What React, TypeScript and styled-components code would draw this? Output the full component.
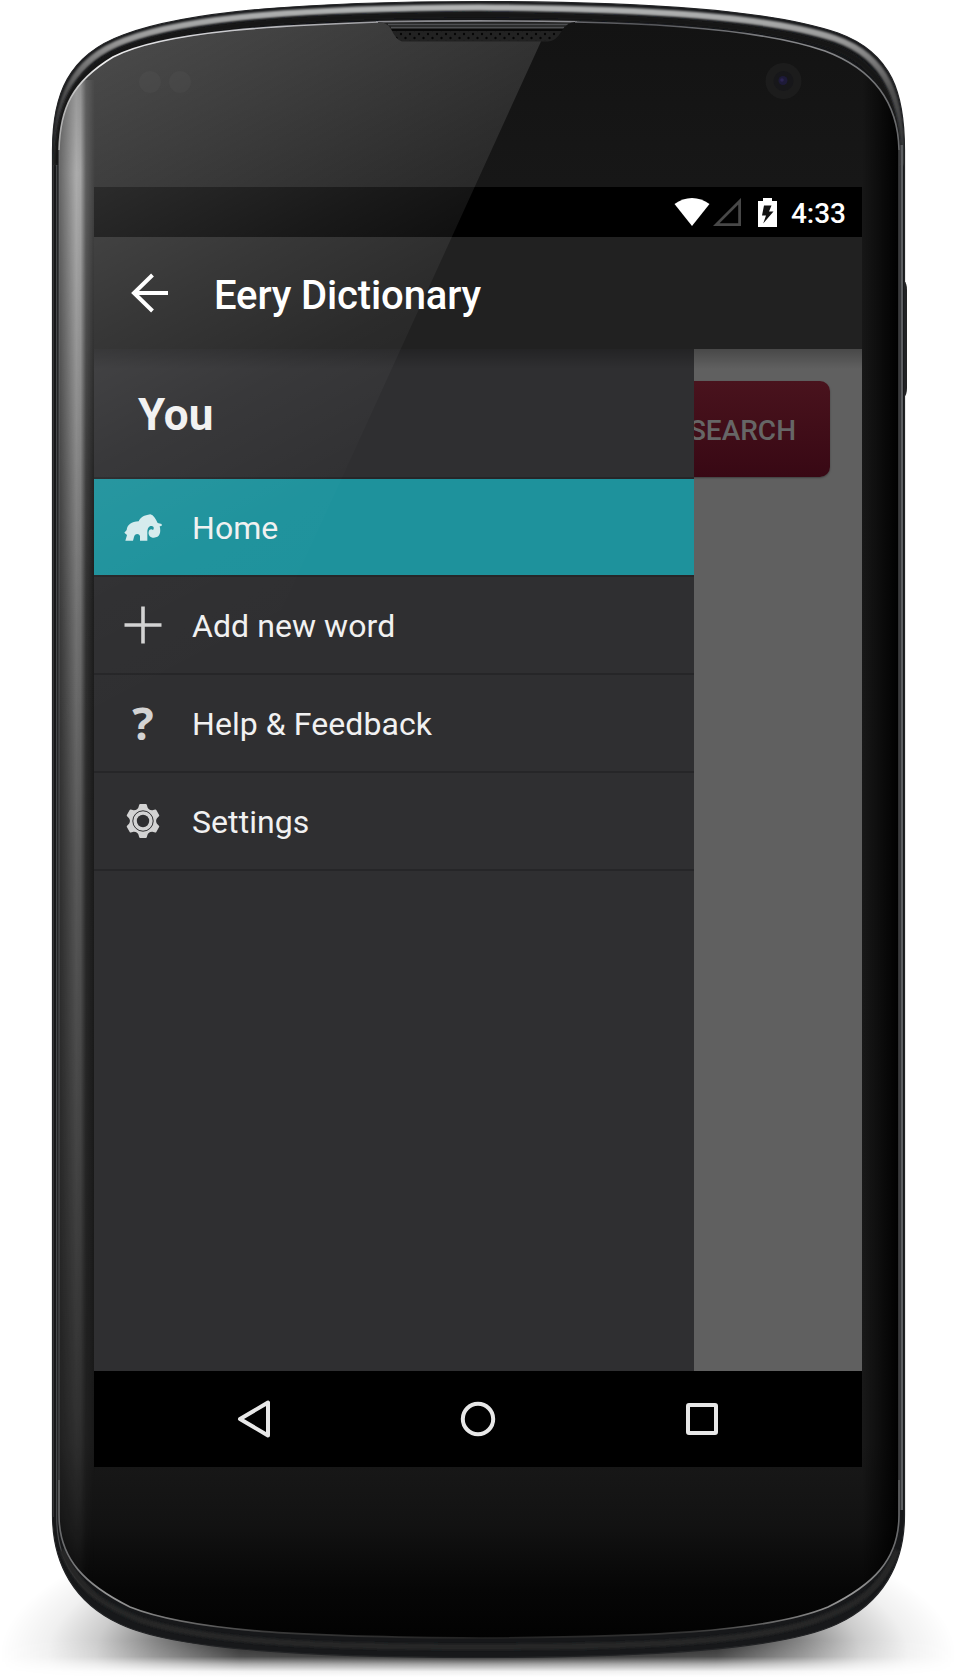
import React from "react";
import styled, { createGlobalStyle, css } from "styled-components";

const GlobalStyle = createGlobalStyle`
  * { box-sizing: border-box; }
  body { margin: 0; background: #fff; font-family: Roboto, sans-serif; }
`;

const Phone = styled.main`
  position: relative;
  width: 958px;
  height: 1678px;
  padding: 187px 96px 211px 94px;
  overflow: hidden;
`;

const Layer = styled.svg`
  position: absolute;
  inset: 0;
  pointer-events: none;
`;

const Screen = styled.div`
  position: relative;
  isolation: isolate;
  width: 768px;
  height: 1280px;
  display: flex;
  flex-direction: column;
  background: #000;
`;

const StatusBar = styled.header`
  height: 50px;
  flex: none;
  display: flex;
  align-items: center;
  justify-content: flex-end;
  padding-right: 16px;
`;

const StatusIcon = styled.svg<{ $gap: number }>`
  display: block;
  margin-right: ${(p) => p.$gap}px;
`;

const Clock = styled.span`
  color: #fff;
  font-size: 28px;
  font-weight: 500;
  line-height: 34px;
  padding-top: 4px;
`;

const Toolbar = styled.div`
  position: relative;
  z-index: 2;
  height: 112px;
  flex: none;
  display: flex;
  align-items: center;
  gap: 39px;
  padding-left: 33px;
  background: #212121;

  &::after {
    content: "";
    position: absolute;
    left: 0;
    right: 0;
    top: 100%;
    height: 20px;
    background: linear-gradient(rgba(0, 0, 0, 0.25), rgba(0, 0, 0, 0.12) 50%, rgba(0, 0, 0, 0));
  }
`;

const Title = styled.h1`
  margin: 0;
  padding-top: 6px;
  color: #fff;
  font-size: 40px;
  font-weight: 500;
  line-height: 48px;
  letter-spacing: -0.13px;
`;

const Content = styled.div`
  position: relative;
  flex: 1;
  display: flex;
  justify-content: flex-end;
  align-items: flex-start;
  padding: 32px;
  background: #606060;
`;

const SearchButton = styled.button`
  height: 96px;
  border: 0;
  border-radius: 10px;
  padding: 3px 34px 0;
  background: linear-gradient(#49131d, #380814);
  box-shadow: 0 1px 2px rgba(0, 0, 0, 0.35);
  color: #666;
  font: 500 28px/34px Roboto, sans-serif;
`;

const Drawer = styled.nav`
  position: absolute;
  top: 0;
  left: 0;
  bottom: 0;
  width: 600px;
  background: #2f2f31;
`;

const DrawerHeader = styled.div`
  height: 130px;
  padding: 41px 0 0 44px;
  border-bottom: 2px solid #262628;
  color: #f1f1f1;
  font-size: 44px;
  font-weight: 700;
  line-height: 50px;
`;

const Item = styled.div<{ $active?: boolean }>`
  height: 98px;
  display: flex;
  align-items: center;
  gap: 25px;
  padding-left: 25px;
  border-bottom: 2px solid #262628;
  color: #f1f1f1;
  ${(p) => p.$active && css`background: #1e929c;`}
`;

const IconSlot = styled.span`
  width: 48px;
  height: 48px;
  display: flex;
  align-items: center;
  justify-content: center;
`;

const QuestionMark = styled.span`
  color: #d3d3d3;
  font: 700 45px/46px "Open Sans", sans-serif;
`;

const Label = styled.span`
  padding-top: 2px;
  font-size: 32px;
  line-height: 38px;
  letter-spacing: 0.07px;
`;

const NavBar = styled.footer`
  height: 96px;
  flex: none;
  display: grid;
  grid-template-columns: repeat(3, 224px);
  justify-content: center;
  align-items: center;
  justify-items: center;
`;

const OUTER =
  "M52.500 150 C52.500 95 68 55 123 35 C190 10 310 2 479 1.500 C650 2 770 10 838 33 C893 53 904.500 95 904.500 150 V1515 C904.500 1565 882 1603 837 1624 C782 1650 647 1657 479 1657.500 C310 1657 175 1650 120 1624 C75 1603 52.500 1565 52.500 1515 Z";
const FACE =
  "M59 150 C60 108 72 82 113 57 C165 30 290 25 378 22 Q387 22 391 29 Q396 40 402 41.500 H548 Q556 41 561 32 Q567 22 575 22 C680 24 770 32 825 51 C870 68 898 100 899 150 V1515 C899 1560 873 1585 828 1607 C765 1633 640 1637 479 1638 C320 1637 195 1633 130 1607 C86 1585 59 1560 59 1515 Z";

function Body() {
  return (
    <Layer width="958" height="1678" viewBox="0 0 958 1678">
      <defs>
        <radialGradient id="shadow" gradientUnits="userSpaceOnUse" cx="0" cy="0" r="1" gradientTransform="translate(478 1655) scale(478 160)">
          <stop offset="0" stopColor="#000" />
          <stop offset=".5" stopColor="#000" stopOpacity=".85" />
          <stop offset=".68" stopColor="#000" stopOpacity=".48" />
          <stop offset=".8" stopColor="#000" stopOpacity=".2" />
          <stop offset=".9" stopColor="#000" stopOpacity=".06" />
          <stop offset="1" stopColor="#000" stopOpacity="0" />
        </radialGradient>
        <linearGradient id="cut" gradientUnits="userSpaceOnUse" x1="0" x2="0" y1="1640" y2="1677">
          <stop offset="0" stopColor="#fff" />
          <stop offset=".45" stopColor="#d0d0d0" />
          <stop offset=".65" stopColor="#606060" />
          <stop offset=".85" stopColor="#101010" />
          <stop offset="1" stopColor="#000" />
        </linearGradient>
        <mask id="cutMask">
          <rect width="958" height="1678" fill="url(#cut)" />
        </mask>
        <linearGradient id="metal" gradientUnits="userSpaceOnUse" x1="0" x2="0" y1="4" y2="150">
          <stop offset="0" stopColor="#b4b6b6" />
          <stop offset=".25" stopColor="#999" />
          <stop offset=".6" stopColor="#505050" />
          <stop offset="1" stopColor="#333436" />
        </linearGradient>
        <linearGradient id="edge" gradientUnits="userSpaceOnUse" x1="60" x2="899" y1="0" y2="0">
          <stop offset="0" stopColor="#a0a0a0" />
          <stop offset=".05" stopColor="#eee" />
          <stop offset=".15" stopColor="#ccccd0" />
          <stop offset=".4" stopColor="#8b8b90" />
          <stop offset=".7" stopColor="#55565a" />
          <stop offset=".9" stopColor="#8b8c8f" />
          <stop offset="1" stopColor="#68696b" />
        </linearGradient>
        <linearGradient id="bottomEdge" gradientUnits="userSpaceOnUse" x1="59" x2="899" y1="0" y2="0">
          <stop offset="0" stopColor="#68696b" />
          <stop offset=".06" stopColor="#999" />
          <stop offset=".25" stopColor="#3a3a3a" />
          <stop offset=".5" stopColor="#222" />
          <stop offset=".75" stopColor="#343434" />
          <stop offset=".94" stopColor="#999" />
          <stop offset="1" stopColor="#68696b" />
        </linearGradient>
        <linearGradient id="face" gradientUnits="userSpaceOnUse" x1="0" x2="0" y1="22" y2="1638">
          <stop offset="0" stopColor="#131313" />
          <stop offset=".1" stopColor="#171717" />
          <stop offset=".88" stopColor="#191919" />
          <stop offset=".93" stopColor="#121212" />
          <stop offset=".97" stopColor="#060606" />
          <stop offset="1" stopColor="#020202" />
        </linearGradient>
        <linearGradient id="sheen" gradientUnits="userSpaceOnUse" x1="59" x2="95" y1="0" y2="0">
          <stop offset="0" stopColor="#b4b4b4" stopOpacity=".3" />
          <stop offset=".2" stopColor="#b4b4b4" stopOpacity=".55" />
          <stop offset=".48" stopColor="#b4b4b4" stopOpacity=".92" />
          <stop offset=".6" stopColor="#b4b4b4" stopOpacity=".85" />
          <stop offset=".75" stopColor="#b4b4b4" stopOpacity=".25" />
          <stop offset="1" stopColor="#b4b4b4" stopOpacity="0" />
        </linearGradient>
        <linearGradient id="sheenFade" gradientUnits="userSpaceOnUse" x1="0" x2="0" y1="80" y2="1640">
          <stop offset="0" stopColor="#b0b0b0" />
          <stop offset=".06" stopColor="#e8e8e8" />
          <stop offset=".24" stopColor="#bcbcbc" />
          <stop offset=".5" stopColor="#747474" />
          <stop offset=".85" stopColor="#2e2e2e" />
          <stop offset=".95" stopColor="#0c0c0c" />
          <stop offset="1" stopColor="#000" />
        </linearGradient>
        <mask id="sheenMask">
          <rect width="958" height="1678" fill="url(#sheenFade)" />
        </mask>
        <linearGradient id="rightShade" gradientUnits="userSpaceOnUse" x1="862" x2="899" y1="0" y2="0">
          <stop offset="0" stopColor="#000" stopOpacity="0" />
          <stop offset=".8" stopColor="#000" stopOpacity=".8" />
          <stop offset="1" stopColor="#000" />
        </linearGradient>
        <clipPath id="faceClip"><path d={FACE} /></clipPath>
        <clipPath id="outerClip"><path d={OUTER} /></clipPath>
        <clipPath id="bottomClip"><rect y="1480" width="958" height="198" /></clipPath>
        <pattern id="dots" x="399" y="32" width="9" height="8" patternUnits="userSpaceOnUse">
          <circle cx="2" cy="2" r="1.2" fill="#050505" />
          <circle cx="6.5" cy="6" r="1.2" fill="#050505" />
        </pattern>
        <filter id="soft"><feGaussianBlur stdDeviation="1" /></filter>
      </defs>

      <rect y="1490" width="958" height="188" fill="url(#shadow)" mask="url(#cutMask)" />
      <path d="M904 281 Q907 283 907 290 V388 Q907 395 904 397 Z" fill="#222324" />
      <path d={OUTER} fill="#17181a" />
      <g clipPath="url(#outerClip)">
        <path d="M55.500 165 C55.500 100 71 60 125 40.500 C190 16 310 8.500 479 7.500 C650 8.500 770 17 835 38.500 C888 57 902 98 902 165" fill="none" stroke="url(#metal)" strokeWidth="6.500" filter="url(#soft)" />
        <path d="M57 165 C57 106 72 72 125 49 C190 24 310 16 479 15 C650 16 770 25 831 46 C884 66 898 106 898 165" fill="none" stroke="#141518" strokeWidth="6" filter="url(#soft)" />
        <path d="M56.700 165 V1517 C56.700 1567 82 1595 125 1614" fill="none" stroke="#77787a" strokeWidth="1.2" opacity=".55" />
        <path d="M53 165 V1517" stroke="#48494b" strokeWidth="1.2" />
        <path d="M901.800 145 V1510" stroke="#5c5e61" strokeWidth="2.500" />
        <path d="M62 1550 C80 1594 110 1608 140 1620 C210 1644 340 1647 479 1647 C620 1647 750 1644 817 1620 C850 1608 880 1594 897 1550" fill="none" stroke="#262828" strokeWidth="6" filter="url(#soft)" />
      </g>
      <path d={OUTER} fill="none" stroke="#222325" strokeWidth="1.2" />

      <path d="M378 20 H580 L560 43 H397 Z" fill="#222" />
      <path d="M388 24.500 H568 M391 27.500 H564" stroke="#4e4f52" strokeWidth="1.4" />
      <path d="M391 30 H563" stroke="#090909" strokeWidth="2" />
      <rect x="396" y="31" width="162" height="10" fill="url(#dots)" />
      <path d="M376 21.700 Q479 20 577 21.700" fill="none" stroke="#8b8b90" strokeWidth="1.6" />

      <path d={FACE} fill="url(#face)" />
      <g clipPath="url(#faceClip)">
        <rect x="862" y="22" width="37" height="1616" fill="url(#rightShade)" />
        <g mask="url(#sheenMask)">
          <rect x="58" y="80" width="37" height="1560" fill="url(#sheen)" />
        </g>
        <circle cx="150" cy="82" r="11" fill="#1a1a1a" />
        <circle cx="180" cy="82" r="11" fill="#1a1a1a" />
        <circle cx="783.5" cy="81" r="18" fill="#1c1c1c" />
        <circle cx="783.5" cy="81" r="10" fill="#17171a" />
        <circle cx="783" cy="80.5" r="4.5" fill="#1d1a38" />
        <circle cx="782" cy="80" r="1.8" fill="#2b2452" />
      </g>
      <path d="M59 150 C60 108 72 82 113 57 C165 30 290 25 378 22 M575 22 C680 24 770 32 825 51 C870 68 898 100 899 150" fill="none" stroke="url(#edge)" strokeWidth="1.6" />
      <path d="M59 150 V1480 M899 150 V1480" stroke="#4d4e50" strokeWidth="1.3" />
      <g clipPath="url(#bottomClip)">
        <path d={FACE} fill="none" stroke="url(#bottomEdge)" strokeWidth="1.6" />
      </g>
    </Layer>
  );
}

function Gloss() {
  return (
    <Layer width="958" height="1678" viewBox="0 0 958 1678">
      <defs>
        <linearGradient id="gloss" gradientUnits="userSpaceOnUse" x1="0" y1="0" x2="322" y2="621">
          <stop offset="0" stopColor="#fff" stopOpacity=".26" />
          <stop offset=".116" stopColor="#fff" stopOpacity=".235" />
          <stop offset=".3" stopColor="#fff" stopOpacity=".17" />
          <stop offset=".49" stopColor="#fff" stopOpacity=".1" />
          <stop offset=".657" stopColor="#fff" stopOpacity=".045" />
          <stop offset=".83" stopColor="#fff" stopOpacity=".01" />
          <stop offset="1" stopColor="#fff" stopOpacity="0" />
        </linearGradient>
      </defs>
      <path d="M59 150 C60 108 72 82 113 57 C165 30 290 25 378 22 Q387 22 391 29 Q396 40 402 41.500 H541 L195 800 H59 Z" fill="url(#gloss)" />
    </Layer>
  );
}

function BackArrow() {
  return (
    <svg width="48" height="48" viewBox="0 0 48 48" fill="none" stroke="#fff" strokeWidth="4">
      <path d="M25.5 6 L7 24 L25.5 42 M7 24 H41" />
    </svg>
  );
}

function Elephant() {
  return (
    <svg width="38" height="27" viewBox="102 130 114 81" fill="#d5ebed">
      <path d="M103 186 L110 178 C112 162 124 153 146 152 C152 139 162 134 181 131 C191 134 196 143 203 157 L215 160 V166 L209 167 C214 186 209 201 192 201 C180 201 174 193 176 183 C178 176 184 174 189 178 C193 174 192 167 185 166 C177 165 172 173 172 184 V210 H150 V197 C148 187 134 187 132 199 L129 210 H106 L111 193 Z" />
    </svg>
  );
}

function Plus() {
  return (
    <svg width="38" height="38" viewBox="0 0 38 38" stroke="#d3d3d3" strokeWidth="3.6">
      <path d="M.5 19 H37.5 M19 .5 V37.5" />
    </svg>
  );
}

function Gear() {
  return (
    <svg width="36" height="36" viewBox="-18 -18 36 36" fill="#d3d3d3">
      {[0, 60, 120, 180, 240, 300].map((angle) => (
        <path key={angle} d="M-6.5 -10.5 L-4.6 -13.5 L-3.8 -16.2 Q-3.6 -17 -2.8 -17 H2.8 Q3.6 -17 3.8 -16.2 L4.6 -13.5 L6.5 -10.5 Z" transform={`rotate(${angle})`} />
      ))}
      <circle r="13.2" />
      <circle r="10.2" fill="none" stroke="#2f2f31" strokeWidth="1" />
      <circle r="6.2" fill="#2f2f31" />
    </svg>
  );
}

const items = [
  { label: "Home", icon: <Elephant />, active: true },
  { label: "Add new word", icon: <Plus /> },
  { label: "Help & Feedback", icon: <QuestionMark>?</QuestionMark> },
  { label: "Settings", icon: <Gear /> },
];

export default function App() {
  return (
    <>
      <GlobalStyle />
      <Phone>
        <Body />
        <Screen>
          <StatusBar>
            <StatusIcon $gap={3} width="36" height="28" viewBox="0 0 36 28">
              <path d="M.5 6 C11 -2 25 -2 35.500 6 L18 28 Z" fill="#fff" />
            </StatusIcon>
            <StatusIcon $gap={17} width="28" height="28" viewBox="0 0 28 28">
              <path d="M3.300 26.600 H26.600 V3.300 Z" fill="none" stroke="#484848" strokeWidth="2.800" />
            </StatusIcon>
            <StatusIcon $gap={14} width="19" height="29" viewBox="0 0 19 29">
              <path d="M5 0 H14 V3 H19 V29 H0 V3 H5 Z" fill="#fff" />
              <path d="M6 7.500 H13.500 L11 13.500 H15.500 L5.200 25.500 L8 17.500 H4 Z" fill="#111" />
            </StatusIcon>
            <Clock>4:33</Clock>
          </StatusBar>
          <Toolbar>
            <BackArrow />
            <Title>Eery Dictionary</Title>
          </Toolbar>
          <Content>
            <SearchButton>SEARCH</SearchButton>
            <Drawer>
              <DrawerHeader>You</DrawerHeader>
              {items.map((item) => (
                <Item key={item.label} $active={item.active}>
                  <IconSlot>{item.icon}</IconSlot>
                  <Label>{item.label}</Label>
                </Item>
              ))}
            </Drawer>
          </Content>
          <NavBar>
            <svg width="36" height="40" viewBox="0 0 36 40" fill="none" stroke="#e8e8e8" strokeWidth="4" strokeLinejoin="round">
              <path d="M32 3.500 V36.500 L4 20 Z" />
            </svg>
            <svg width="36" height="36" viewBox="0 0 36 36" fill="none" stroke="#e8e8e8" strokeWidth="4">
              <circle cx="18" cy="18" r="15.200" />
            </svg>
            <svg width="32" height="32" viewBox="0 0 32 32" fill="none" stroke="#e8e8e8" strokeWidth="4">
              <rect x="2" y="2" width="28" height="28" rx="1" />
            </svg>
          </NavBar>
        </Screen>
        <Gloss />
      </Phone>
    </>
  );
}
